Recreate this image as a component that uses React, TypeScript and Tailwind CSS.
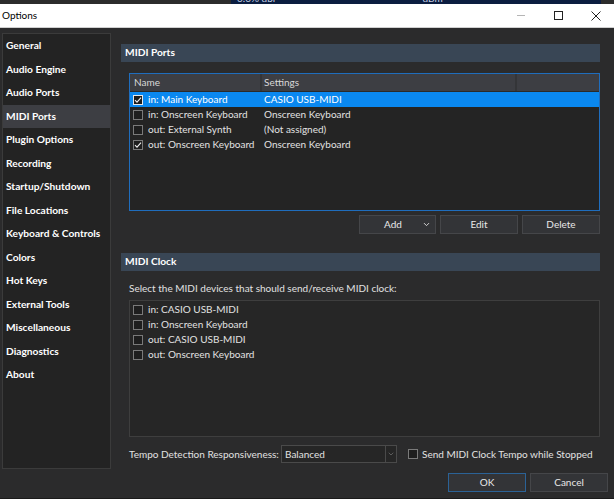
import { ChevronDown } from "lucide-react";

const navItems = [
  "General",
  "Audio Engine",
  "Audio Ports",
  "MIDI Ports",
  "Plugin Options",
  "Recording",
  "Startup/Shutdown",
  "File Locations",
  "Keyboard & Controls",
  "Colors",
  "Hot Keys",
  "External Tools",
  "Miscellaneous",
  "Diagnostics",
  "About",
];

const ports = [
  { name: "in: Main Keyboard", settings: "CASIO USB-MIDI", checked: true, selected: true },
  { name: "in: Onscreen Keyboard", settings: "Onscreen Keyboard", checked: false },
  { name: "out: External Synth", settings: "(Not assigned)", checked: false },
  { name: "out: Onscreen Keyboard", settings: "Onscreen Keyboard", checked: true },
];

const clockDevices = [
  "in: CASIO USB-MIDI",
  "in: Onscreen Keyboard",
  "out: CASIO USB-MIDI",
  "out: Onscreen Keyboard",
];

function Check({ checked, light }: { checked?: boolean; light?: boolean }) {
  return (
    <span
      className={`w-[10px] h-[10px] shrink-0 border flex items-center justify-center ${
        light ? "border-[#e8e8e8] bg-[#1c1c1c]" : "border-[#7a7a7a] bg-[#1e1e1e]"
      }`}
    >
      {checked && (
        <svg width="8" height="8" viewBox="0 0 8 8">
          <path d="M1 4.2 L3 6.2 L7 1.6" fill="none" stroke="#f0f0f0" strokeWidth="1.1" />
        </svg>
      )}
    </span>
  );
}

function SectionHeader({ title }: { title: string }) {
  return (
    <div className="h-[18px] w-[479px] bg-[#394655] flex items-center px-[4px] text-[10.2px] font-bold text-white">
      {title}
    </div>
  );
}

function Button({ label, className = "" }: { label: string; className?: string }) {
  return (
    <div
      className={`h-[19px] w-[78px] bg-[#333437] border flex items-center justify-center text-[10px] text-[#e8e8e8] ${className}`}
    >
      {label}
    </div>
  );
}

export default function App() {
  return (
    <div className="w-[614px] h-[499px] bg-[#2b2b2c] font-['Lato',sans-serif] flex flex-col overflow-hidden">
      {/* strip of the app behind */}
      <div className="h-[4px] flex overflow-hidden bg-[#2c2c2c]">
        <div className="w-[231px] shrink-0" />
        <div className="w-[370px] shrink-0 bg-[#0b1d40] flex text-[10px] leading-[10px] text-[#c9d3e6] -mt-[7px]">
          <span className="ml-[6px]">0.0% dbl</span>
          <span className="ml-[140px]">--dBm</span>
        </div>
      </div>

      {/* title bar */}
      <div className="h-[24px] bg-white flex items-center border-b border-[#d0d0d0]">
        <span className="ml-[2px] text-[10px] text-black">Options</span>
        <div className="ml-auto flex items-center">
          <div className="w-[8px] h-px bg-[#b5b5b5] mr-[29px]" />
          <div className="w-[9px] h-[9px] border border-[#222] mr-[28px]" />
          <svg width="10" height="10" viewBox="0 0 10 10" className="mr-[13px]">
            <path d="M0.5 0.5 L9.5 9.5 M9.5 0.5 L0.5 9.5" stroke="#222" strokeWidth="1" />
          </svg>
        </div>
      </div>

      {/* body */}
      <div className="flex-1 flex pt-[5px] border-b border-[#1a1a1a]">
        {/* sidebar */}
        <div className="ml-[2px] w-[109px] shrink-0 h-[436px] bg-[#232323] border border-[#3b3b3b]">
          {navItems.map((item) => (
            <div
              key={item}
              className={`h-[23.5px] flex items-center px-[3px] text-[10.2px] font-bold text-white whitespace-nowrap ${
                item === "MIDI Ports" ? "bg-[#3d3e43]" : ""
              }`}
            >
              {item}
            </div>
          ))}
        </div>

        {/* main */}
        <div className="w-[490px] shrink-0 pl-[10px] pt-[11px] flex flex-col">
          <SectionHeader title="MIDI Ports" />

          <div className="pl-[8px] pt-[11px] w-[479px]">
            <div className="h-[138px] border border-[#1f6dbd] bg-[#242424] flex flex-col">
              <div className="h-[18px] bg-[#3d3e43] flex text-[10px] text-[#d8d8d8] border-b border-[#2a2a2a]">
                <div className="w-[132px] px-[4px] flex items-center border-r-2 border-[#343538]">Name</div>
                <div className="w-[255px] px-[2px] flex items-center border-r-2 border-[#343538]">Settings</div>
                <div className="flex-1" />
              </div>
              {ports.map((p) => (
                <div
                  key={p.name}
                  className={`h-[15px] flex items-center text-[10px] ${
                    p.selected ? "bg-[#0a88f0] text-white" : "text-[#e2e2e2]"
                  }`}
                >
                  <div className="w-[132px] shrink-0 pl-[3px] flex items-center gap-[5px] whitespace-nowrap overflow-hidden">
                    <Check checked={p.checked} light={p.selected} />
                    {p.name}
                  </div>
                  <div className="pl-[2px] whitespace-nowrap">{p.settings}</div>
                </div>
              ))}
            </div>

            <div className="flex justify-end gap-[4px] mt-[4px]">
              <div className="h-[19px] w-[77px] bg-[#333437] border border-[#454649] flex items-center text-[10px] text-[#e8e8e8]">
                <span className="flex-1 text-center pl-[4px]">Add</span>
                <ChevronDown size={9} strokeWidth={2.5} className="mr-[4px] text-[#dcdcdc]" />
              </div>
              <Button label="Edit" className="border-[#454649]" />
              <Button label="Delete" className="border-[#454649]" />
            </div>
          </div>

          <div className="mt-[19px]">
            <SectionHeader title="MIDI Clock" />
          </div>

          <div className="pl-[8px] w-[479px]">
            <div className="h-[29px] pt-[6px] flex items-center text-[10px] text-[#e2e2e2] whitespace-nowrap">
              Select the MIDI devices that should send/receive MIDI clock:
            </div>
            <div className="h-[137px] border border-[#3e3e3e] bg-[#262626] pt-[1px]">
              {clockDevices.map((d) => (
                <div key={d} className="h-[15px] flex items-center gap-[5px] pl-[3px] text-[10px] text-[#e2e2e2]">
                  <Check />
                  {d}
                </div>
              ))}
            </div>

            <div className="flex items-center mt-[8px] text-[10px] text-[#e2e2e2] whitespace-nowrap">
              <span className="w-[152px] shrink-0">Tempo Detection Responsiveness:</span>
              <div className="w-[116px] shrink-0 h-[18px] border border-[#4a4a4a] bg-[#262626] flex items-center">
                <span className="flex-1 pl-[3px]">Balanced</span>
                <div className="w-[11px] h-full border-l border-[#4a4a4a] flex items-center justify-center">
                  <ChevronDown size={8} strokeWidth={2} className="text-[#777]" />
                </div>
              </div>
              <div className="ml-[11px] flex items-center gap-[4px]">
                <Check />
                Send MIDI Clock Tempo while Stopped
              </div>
            </div>

            <div className="flex justify-end gap-[4px] mt-[10px] -mr-[8px]">
              <Button label="OK" className="border-[#2b6296]" />
              <Button label="Cancel" className="border-[#454649]" />
            </div>
          </div>
        </div>
      </div>
    </div>
  );
}
